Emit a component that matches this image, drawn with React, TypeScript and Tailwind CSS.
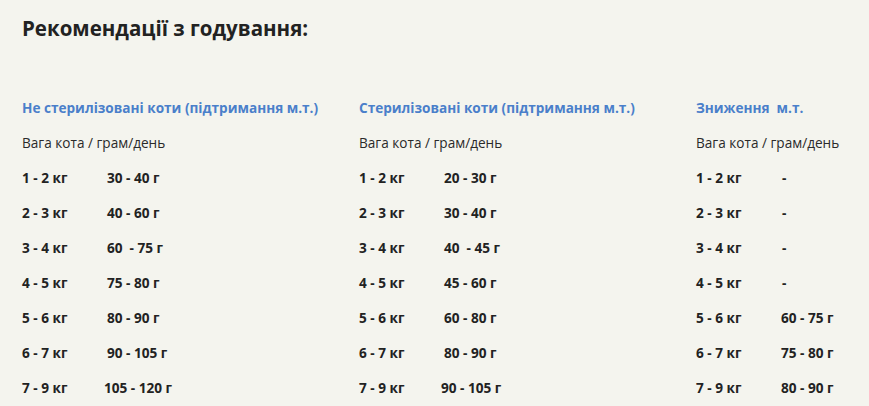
import React from "react";

type Row = { w: string; g: string; shift?: number };

type Column = { title: string; rows: Row[] };

const COLUMNS: Column[] = [
  {
    title: "Не стерилізовані коти (підтримання м.т.)",
    rows: [
      { w: "1 - 2 кг", g: "30 - 40 г" },
      { w: "2 - 3 кг", g: "40 - 60 г" },
      { w: "3 - 4 кг", g: "60\u00a0 - 75 г" },
      { w: "4 - 5 кг", g: "75 - 80 г" },
      { w: "5 - 6 кг", g: "80 - 90 г" },
      { w: "6 - 7 кг", g: "90 - 105 г" },
      { w: "7 - 9 кг", g: "105 - 120 г", shift: -3 },
    ],
  },
  {
    title: "Стерилізовані коти (підтримання м.т.)",
    rows: [
      { w: "1 - 2 кг", g: "20 - 30 г" },
      { w: "2 - 3 кг", g: "30 - 40 г" },
      { w: "3 - 4 кг", g: "40\u00a0 - 45 г" },
      { w: "4 - 5 кг", g: "45 - 60 г" },
      { w: "5 - 6 кг", g: "60 - 80 г" },
      { w: "6 - 7 кг", g: "80 - 90 г" },
      { w: "7 - 9 кг", g: "90 - 105 г", shift: -3 },
    ],
  },
  {
    title: "Зниження\u00a0 м.т.",
    rows: [
      { w: "1 - 2 кг", g: "-", shift: 1 },
      { w: "2 - 3 кг", g: "-", shift: 1 },
      { w: "3 - 4 кг", g: "-", shift: 1 },
      { w: "4 - 5 кг", g: "-", shift: 1 },
      { w: "5 - 6 кг", g: "60 - 75 г" },
      { w: "6 - 7 кг", g: "75 - 80 г" },
      { w: "7 - 9 кг", g: "80 - 90 г" },
    ],
  },
];

function FeedColumn({ col }: { col: Column }) {
  return (
    <div className="flex flex-col">
      <div className="h-[35px] flex items-center text-[13.6px] font-bold text-[#4a7fca] whitespace-nowrap">{col.title}</div>
      <div className="h-[35px] flex items-center text-[13.6px] text-[#2a2a2a]">Вага кота / грам/день</div>
      {col.rows.map((r) => (
        <div key={r.w} className="h-[35px] flex items-center text-[13.6px] font-bold text-[#222]">
          <span className="w-[85px] shrink-0">{r.w}</span>
          {/* a few values sit a couple px off in the original */}
          <span style={r.shift ? { marginLeft: r.shift } : undefined}>{r.g}</span>
        </div>
      ))}
    </div>
  );
}

export default function App() {
  return (
    <div className="w-[869px] h-[406px] overflow-hidden bg-[#f4f4ee] px-[22px] pt-[14px] font-['Open_Sans',sans-serif]">
      <h2 className="h-[28px] leading-[28px] text-[20.5px] font-bold text-[#222]">Рекомендації з годування:</h2>
      <div className="mt-[49px] grid grid-cols-[337px_337px_1fr]">
        {COLUMNS.map((c) => (
          <FeedColumn key={c.title} col={c} />
        ))}
      </div>
    </div>
  );
}
